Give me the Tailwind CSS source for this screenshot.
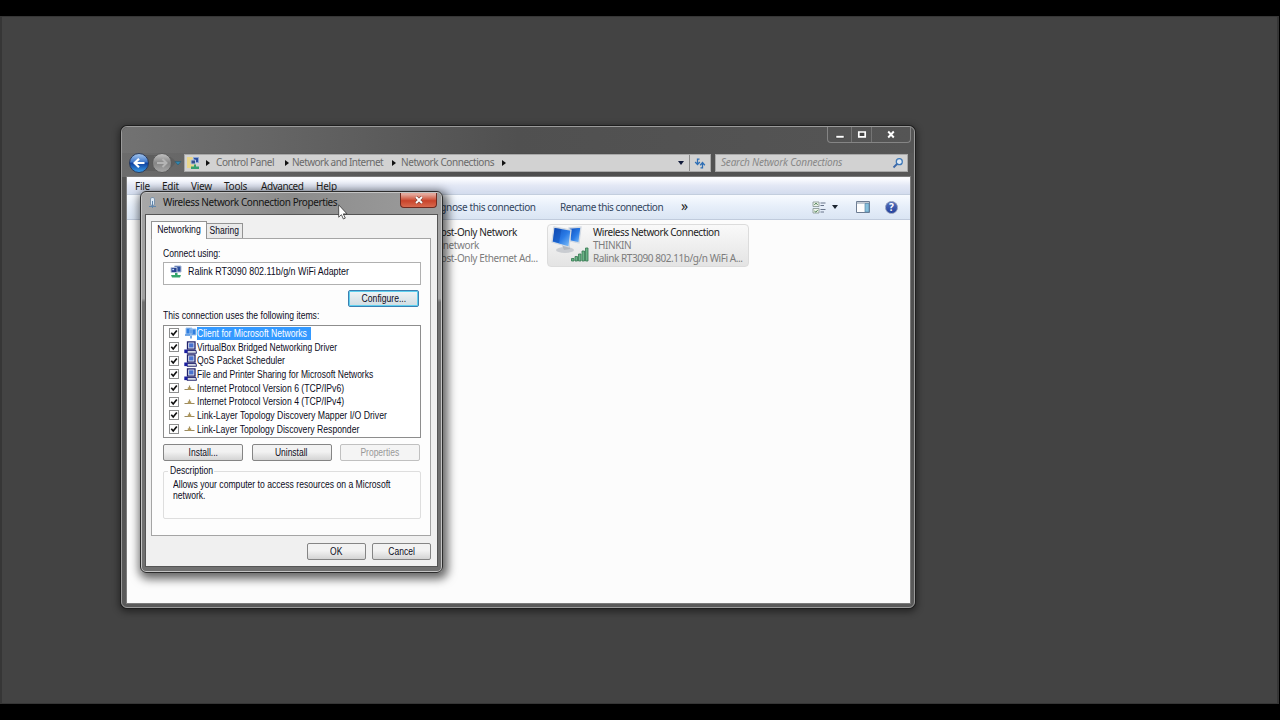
<!DOCTYPE html>
<html lang="en">
<head>
    <meta charset="UTF-8">
    <meta name="viewport" content="width=device-width, initial-scale=1.0">
    <title>Network Connections</title>
    <script src="https://cdn.jsdelivr.net/npm/@tailwindcss/browser@4"></script>
</head>
<body class="bg-black">
    <!-- Shared icons -->
    <svg class="hidden">
        <symbol id="check" viewBox="0 0 10 10">
            <rect x=".5" y=".5" width="9" height="9" fill="#fff" stroke="#8e8f8f"/>
            <path d="M2.3 4.8 4.2 7 7.8 2.4" fill="none" stroke="#111" stroke-width="1.7"/>
        </symbol>
        <symbol id="service" viewBox="0 0 13 13">
            <path d="M3.500 .8H11v7.400H3.500z" fill="#dfe4f2" stroke="#20226a" stroke-width="1.3"/>
            <path d="M5.100 2.300h4.400v4.200H5.100z" fill="#4a72cf"/>
            <path d="M3 9.500h9l.5 2.800H3z" fill="#d5d8e4" stroke="#20226a" stroke-width=".9"/>
            <path d="M.3 8.500h3.200v3.600H.3z" fill="#1a1ea0"/>
        </symbol>
        <symbol id="protocol" viewBox="0 0 11 8">
            <path d="M.5 5.500h10M5.500 1.500v4" stroke="#9a8a62" stroke-width="1.200"/>
            <path d="M3.800 3.300h3.400v2.400H3.800z" fill="#b39a5a"/>
        </symbol>
        <symbol id="adapter" viewBox="0 0 13 13">
            <path d="M5.500 1H12v6H5.500z" fill="#2c4f9f" stroke="#a9b8d4"/>
            <path d="M2 2.500h6v5H2z" fill="#27408f" stroke="#b6c3dc"/>
            <path d="M3.300 3.800h1.800v1.400H3.300z" fill="#bfe0ff"/>
            <path d="M6 8h2.500v2H12l-1 2.500H3L2 10h4z" fill="#35a56b"/>
        </symbol>
    </svg>

    <!-- Desktop -->
    <div class="relative w-[1280px] h-[720px] overflow-hidden bg-black pt-4 pb-4">
        <div class="h-[688px] w-[1279px] bg-[#434343] border-x-2 border-t border-b border-[#363636]"></div>

        <!-- Explorer window -->
        <div class="absolute left-[121px] top-[126px] w-[794px] h-[482px] rounded-md border border-[#9a9a9a] bg-linear-to-b from-[#575757] via-[#4e4e4e] to-[#5a5a5a] shadow-[0_0_0_1px_#1e1e1e,0_2px_7px_2px_rgba(0,0,0,0.45)] flex flex-col pl-[5px] pr-[4px] pb-1 font-['Noto_Sans',sans-serif] text-[10px]">
            <!-- Caption buttons -->
            <div class="h-[26px] -ml-[5px] -mr-[4px] pr-[3px] flex justify-end items-start rounded-t-md bg-linear-to-r from-[#727272] via-[#505050] to-[#555]">
                <div class="flex h-[16px] w-[84px] border border-t-0 border-[#858585] rounded-b">
                    <div class="w-[24px] border-r border-[#747474] flex items-center justify-center">
                        <svg class="w-[10px] h-[10px]" viewBox="0 0 10 10"><path d="M1 5.500h8v2.500H1z" fill="#fff" stroke="#333" stroke-width=".5"/></svg>
                    </div>
                    <div class="w-[20px] border-r border-[#747474] flex items-center justify-center">
                        <svg class="w-[10px] h-[10px]" viewBox="0 0 10 10"><path d="M1.800 2h6.400v4.800H1.800z" fill="#444" stroke="#fff" stroke-width="1.700"/></svg>
                    </div>
                    <div class="grow flex items-center justify-center">
                        <svg class="w-[10px] h-[10px]" viewBox="0 0 10 10"><path d="M2.200 1.500 7.800 7.500M7.800 1.500 2.200 7.500" stroke="#fff" stroke-width="1.900"/></svg>
                    </div>
                </div>
            </div>

            <!-- Address bar -->
            <div class="h-[24px] -ml-[5px] -mr-[4px] pl-[7px] pr-[6px] flex items-start shrink-0 bg-linear-to-r from-[#6c6c6c] via-[#4d4d4d] to-[#575757]">
                <svg class="w-[54px] h-[22px] shrink-0" viewBox="0 0 54 22">
                    <defs>
                        <linearGradient id="back" x1="0" y1="0" x2="0" y2="1">
                            <stop offset="0" stop-color="#a9c9ee"/><stop offset=".45" stop-color="#3f78cb"/>
                            <stop offset=".5" stop-color="#0f3f9e"/><stop offset="1" stop-color="#3aa0ec"/>
                        </linearGradient>
                        <linearGradient id="fwd" x1="0" y1="0" x2="0" y2="1">
                            <stop offset="0" stop-color="#c4c4c4"/><stop offset=".5" stop-color="#858585"/><stop offset="1" stop-color="#a8a8a8"/>
                        </linearGradient>
                    </defs>
                    <path d="M10 2h24q8 0 13 7-5 8-13 9H10z" fill="#5e5e5e"/>
                    <circle cx="10" cy="10" r="9.500" fill="url(#back)" stroke="#2c3c5c"/>
                    <path d="M15.500 10H6M10 5.800 5.600 10l4.400 4.200" fill="none" stroke="#fff" stroke-width="2.200"/>
                    <circle cx="33" cy="10" r="9.500" fill="url(#fwd)" stroke="#5a5a5a"/>
                    <path d="M28 10h9M33.500 6l4 4-4 4" fill="none" stroke="#b4b4b4" stroke-width="2"/>
                    <path d="M46 8.500h6l-3 3.500z" fill="#2f86b0" stroke="#2a5a70" stroke-width=".6"/>
                </svg>
                <div class="ml-px flex h-[18px] mt-px w-[527px] bg-[#d2d2d2] border border-[#a8a8a8] text-[#6a6a6a] items-center">
                    <svg class="w-[15px] h-[14px] ml-px" viewBox="0 0 15 14">
                        <path d="M1 1h5l1 1h3v10H1z" fill="#e9d68a"/>
                        <path d="M7.500 1.500h5v5h-5z" fill="#2d4f9f" stroke="#8aa5d5"/>
                        <path d="M5 4h4.500v4H5z" fill="#37508f" stroke="#b5c6e2"/>
                        <path d="M8 8.500h2v2h3V13H5v-2.500h3z" fill="#35a070"/>
                    </svg>
                    <svg class="w-[4px] h-[6px] ml-[5px]" viewBox="0 0 4 6"><path d="M0 0v6l4-3z" fill="#111"/></svg>
                    <span class="w-[69px] ml-[6px] pb-px whitespace-nowrap tracking-[-0.4px]">Control Panel</span>
                    <svg class="w-[4px] h-[6px]" viewBox="0 0 4 6"><path d="M0 0v6l4-3z" fill="#111"/></svg>
                    <span class="w-[100px] ml-[3px] pb-px whitespace-nowrap tracking-[-0.53px]">Network and Internet</span>
                    <svg class="w-[4px] h-[6px]" viewBox="0 0 4 6"><path d="M0 0v6l4-3z" fill="#111"/></svg>
                    <span class="w-[101px] ml-[5px] pb-px whitespace-nowrap tracking-[-0.43px]">Network Connections</span>
                    <svg class="w-[4px] h-[6px]" viewBox="0 0 4 6"><path d="M0 0v6l4-3z" fill="#111"/></svg>
                    <svg class="w-[6px] h-[4px] ml-auto mr-[5px]" viewBox="0 0 6 4"><path d="M0 0h6L3 4z" fill="#101a3a"/></svg>
                    <div class="w-[21px] h-full border-l border-[#8c8c8c] flex items-center justify-center">
                        <svg class="w-[12px] h-[11px]" viewBox="0 0 12 11">
                            <path d="M5.500 1.200H3.500v5M1.200 4l2.300 2.600L5.800 4M6.500 9.800h2v-5M6.200 7.200l2.300-2.600 2.300 2.600" fill="none" stroke="#2f6fb5" stroke-width="1.300"/>
                        </svg>
                    </div>
                </div>
                <div class="ml-[4px] mt-px grow h-[18px] bg-[#d2d2d2] border border-[#a8a8a8] flex items-center justify-between pl-[5px] pr-[3px] text-[#888] italic">
                    <span class="pb-px whitespace-nowrap tracking-[-0.2px]">Search Network Connections</span>
                    <svg class="w-[12px] h-[12px]" viewBox="0 0 12 12"><circle cx="7.300" cy="4.700" r="3" fill="#dfe9f4" stroke="#3d78b8" stroke-width="1.300"/><path d="M5 7 1.500 10.500" stroke="#3d68a8" stroke-width="1.800"/></svg>
                </div>
            </div>

            <!-- Client area -->
            <div class="grow bg-[#fcfcfc] flex flex-col shadow-[0_0_0_1px_#7c7c7c] text-[#1e1e1e]">
                <div class="h-[17px] pt-[2px] bg-linear-to-b from-[#fbfcff] from-10% via-[#e3e8f5] to-[#d3dcee] flex items-center whitespace-nowrap pl-[8px] tracking-[-0.25px]">
                    <span class="w-[27px]">File</span>
                    <span class="w-[29px]">Edit</span>
                    <span class="w-[33px]">View</span>
                    <span class="w-[37px]">Tools</span>
                    <span class="w-[55px] tracking-[-0.45px]">Advanced</span>
                    <span>Help</span>
                </div>
                <div class="h-[26px] border-t border-[#c3cede] border-b border-b-[#c0cbdc] bg-linear-to-b from-[#f8fbff] via-[#e6eef9] to-[#dae5f3] flex items-center pl-[299px] pr-[12px] whitespace-nowrap text-[#33465f]">
                    <span class="w-[134px] tracking-[-0.38px]">Diagnose this connection</span>
                    <span class="w-[121px] tracking-[-0.45px]">Rename this connection</span>
                    <span class="text-[14px] leading-none pb-[2px] text-[#222]">»</span>
                    <svg class="w-[14px] h-[13px] ml-auto" viewBox="0 0 14 13">
                        <path d="M1 1h6v4.500H1zM1 7.500h6V12H1z" fill="#eef4ea" stroke="#8d9c98" stroke-width=".9"/>
                        <path d="m2.300 4 1.700-2 1.700 2M2.300 10l1.700 1.200L5.700 9" fill="none" stroke="#57895f"/>
                        <path d="M8.500 2h5M8.500 4.500H12M8.500 8.500h5M8.500 11H12" stroke="#68748a"/>
                    </svg>
                    <svg class="w-[6px] h-[4px] ml-[6px]" viewBox="0 0 6 4"><path d="M0 0h6L3 4z" fill="#1c2430"/></svg>
                    <svg class="w-[14px] h-[12px] ml-[18px]" viewBox="0 0 14 12">
                        <path d="M.5.500h13v11H.5z" fill="#fdfdfd" stroke="#6d7c92"/><path d="M.5 2h13" stroke="#8494a8"/><path d="M9 2.500h4v8.500H9z" fill="#86bfdc" stroke="#5a87a8" stroke-width=".7"/>
                    </svg>
                    <div class="ml-[15px] w-[13px] h-[13px] rounded-full bg-linear-to-b from-[#5570bd] to-[#24419c] border border-[#8a96b8] text-white text-[10px] font-bold leading-none flex items-center justify-center">?</div>
                </div>
                <div class="flex pt-[4px] pl-[215px] leading-[13px] whitespace-nowrap">
                    <div class="w-[205px] h-[43px] pl-[45px] pt-[2px] tracking-[-0.38px]">
                        <div>VirtualBox Host-Only Network</div>
                        <div class="text-[#7c7c7c]">Unidentified network</div>
                        <div class="text-[#7c7c7c]">VirtualBox Host-Only Ethernet Ad...</div>
                    </div>
                    <div class="w-[202px] h-[43px] flex border border-[#dcdcdc] rounded-sm bg-linear-to-b from-[#f9f9f9] to-[#e4e4e4] pl-[3px] pt-px">
                        <svg class="w-[38px] h-[38px] mr-[4px]" viewBox="0 0 38 38">
                            <defs>
                                <linearGradient id="scr" x1="0" y1="0" x2="1" y2="1">
                                    <stop offset="0" stop-color="#0c49b8"/><stop offset=".55" stop-color="#2a7be6"/><stop offset="1" stop-color="#8cc8fa"/>
                                </linearGradient>
                            </defs>
                            <ellipse cx="14" cy="24" rx="9" ry="3" fill="#c9ccd1"/>
                            <path d="m11 19 7-1 1 5-6 1z" fill="#b3b8bf"/>
                            <path d="m18 2 12-1-2 16-9-2z" fill="url(#scr)" stroke="#d3dae3" stroke-width="1.300"/>
                            <path d="m3 1 17 3-2 17L1 16z" fill="url(#scr)" stroke="#d3dae3" stroke-width="1.300"/>
                            <path d="m3.500 2 7 1L8 17l-6-2z" fill="#0a3d9e" opacity=".35"/>
                            <g fill="#6bb487" stroke="#33774f" stroke-width=".8">
                                <path d="M20.500 32.500h2.500V35h-2.500zM24 30.500h2.500V35H24zM27.500 28h2.500v7h-2.500zM31 25h2.500v10H31zM34.500 22H37v13h-2.500z"/>
                            </g>
                        </svg>
                        <div class="tracking-[-0.44px]">
                            <div>Wireless Network Connection</div>
                            <div class="text-[#7c7c7c]">THINKIN</div>
                            <div class="text-[#7c7c7c]">Ralink RT3090 802.11b/g/n WiFi A...</div>
                        </div>
                    </div>
                </div>
            </div>
        </div>

        <!-- Properties dialog -->
        <div class="absolute left-[140px] top-[191px] w-[303px] h-[382px] rounded-md border border-[#2c2c2c] bg-linear-to-b from-[#a2a2a2] from-28% to-[#707070] to-29% shadow-[inset_0_0_0_1px_#c4c4c4,2px_3px_10px_3px_rgba(0,0,0,0.6)] flex flex-col px-[5px] pb-[6px] font-['Liberation_Sans',sans-serif] text-[10px] text-[#0c0c1c]">
            <div class="h-[22px] shrink-0 -mx-1 px-1 mt-px flex items-start rounded-t bg-linear-to-r from-[#a8a8a8] via-[#8c8c8c] to-[#9c9c9c]">
                <svg class="w-[9px] h-[12px] ml-[2px] mt-[4px]" viewBox="0 0 9 12"><rect x="2.500" y=".5" width="4" height="8" rx="1.500" fill="#dce9f5" stroke="#7e93aa"/><path d="M1 9.500h7M4.500 4v7" stroke="#5f86ad"/></svg>
                <span class="ml-[6px] mt-px leading-[16px] tracking-[-0.4px] font-['Noto_Sans',sans-serif] whitespace-nowrap text-[#151515]">Wireless Network Connection Properties</span>
                <div class="ml-auto h-[15px] w-[37px] rounded-b border border-t-0 border-[#6e2a20] bg-linear-to-b from-[#e3a79a] from-10% via-[#c8432a] via-55% to-[#d8694e] flex items-center justify-center">
                    <svg class="w-[10px] h-[9px]" viewBox="0 0 10 9"><path d="M2 1 8 7M8 1 2 7" stroke="#6e3a30" stroke-width="3"/><path d="M2 1 8 7M8 1 2 7" stroke="#fff" stroke-width="1.900"/></svg>
                </div>
            </div>
            <div class="grow bg-[#f0f0f0] shadow-[0_0_0_1px_#555] flex flex-col pl-[5px] pr-[6px] pt-[5px]">
                <!-- Tabs -->
                <div class="flex items-end h-[18px] relative whitespace-nowrap">
                    <div class="h-[18px] w-[56px] -mb-px pb-[3px] bg-[#fdfdfd] border border-b-0 border-[#939393] flex items-center justify-center relative z-10"><span class="scale-x-[0.87]">Networking</span></div>
                    <div class="h-[15px] w-[36px] pb-px bg-[#eaeaea] border border-b-0 border-l-0 border-[#939393] flex items-center justify-center"><span class="scale-x-[0.85]">Sharing</span></div>
                </div>
                <div class="h-[298px] bg-[#fdfdfd] border border-[#a5a5a5] pl-[11px] pr-[9px] flex flex-col">
                    <span class="mt-[9px] leading-[12px] origin-left scale-x-[0.86]">Connect using:</span>
                    <div class="mt-[2px] h-[23px] shrink-0 border border-[#b0b0b0] bg-white flex items-center pl-[5px] pb-[4px] whitespace-nowrap">
                        <svg class="w-[13px] h-[13px] mr-[6px]"><use href="#adapter"/></svg>
                        <span class="origin-left scale-x-[0.89]">Ralink RT3090 802.11b/g/n WiFi Adapter</span>
                    </div>
                    <div class="mt-[5px] self-end mr-[2px] w-[71px] h-[17px] rounded-xs border border-[#3c7fb1] shadow-[inset_0_0_0_1px_#5fd0ef] bg-linear-to-b from-[#f0f4f6] to-[#d0dce2] flex items-center justify-center"><span class="scale-x-[0.86]">Configure...</span></div>
                    <span class="mt-[3px] leading-[12px] origin-left scale-x-[0.86]">This connection uses the following items:</span>
                    <div class="mt-[3px] h-[113px] shrink-0 border border-[#8d8d8d] bg-white pt-[0.5px] pl-[5px] whitespace-nowrap">
                        <div class="flex items-center h-[13.7px]"><svg class="w-[10px] h-[10px] mr-[5px]"><use href="#check"/></svg>
                            <svg class="w-[13px] h-[12px]" viewBox="0 0 13 12"><path d="M2 1h6v6H2zM6 2h6v6H6z" fill="#2e7ee0" stroke="#9fc4ee"/><path d="M1 8h5M7 8.500v3" stroke="#4a8fe0" stroke-width="1.500"/></svg>
                            <div class="h-[13px] leading-[13px] bg-[#3399ff] text-white w-[114px]"><span class="inline-block origin-left scale-x-[0.86]">Client for Microsoft Networks</span></div></div>
                        <div class="flex items-center h-[13.7px]"><svg class="w-[10px] h-[10px] mr-[5px]"><use href="#check"/></svg><svg class="w-[13px] h-[13px]"><use href="#service"/></svg><span class="origin-left scale-x-[0.85]">VirtualBox Bridged Networking Driver</span></div>
                        <div class="flex items-center h-[13.7px]"><svg class="w-[10px] h-[10px] mr-[5px]"><use href="#check"/></svg><svg class="w-[13px] h-[13px]"><use href="#service"/></svg><span class="origin-left scale-x-[0.87]">QoS Packet Scheduler</span></div>
                        <div class="flex items-center h-[13.7px]"><svg class="w-[10px] h-[10px] mr-[5px]"><use href="#check"/></svg><svg class="w-[13px] h-[13px]"><use href="#service"/></svg><span class="origin-left scale-x-[0.85]">File and Printer Sharing for Microsoft Networks</span></div>
                        <div class="flex items-center h-[13.7px]"><svg class="w-[10px] h-[10px] mr-[5px]"><use href="#check"/></svg><svg class="w-[11px] h-[8px] mr-[2px]"><use href="#protocol"/></svg><span class="origin-left scale-x-[0.865]">Internet Protocol Version 6 (TCP/IPv6)</span></div>
                        <div class="flex items-center h-[13.7px]"><svg class="w-[10px] h-[10px] mr-[5px]"><use href="#check"/></svg><svg class="w-[11px] h-[8px] mr-[2px]"><use href="#protocol"/></svg><span class="origin-left scale-x-[0.865]">Internet Protocol Version 4 (TCP/IPv4)</span></div>
                        <div class="flex items-center h-[13.7px]"><svg class="w-[10px] h-[10px] mr-[5px]"><use href="#check"/></svg><svg class="w-[11px] h-[8px] mr-[2px]"><use href="#protocol"/></svg><span class="origin-left scale-x-[0.87]">Link-Layer Topology Discovery Mapper I/O Driver</span></div>
                        <div class="flex items-center h-[13.7px]"><svg class="w-[10px] h-[10px] mr-[5px]"><use href="#check"/></svg><svg class="w-[11px] h-[8px] mr-[2px]"><use href="#protocol"/></svg><span class="origin-left scale-x-[0.865]">Link-Layer Topology Discovery Responder</span></div>
                    </div>
                    <div class="mt-[6px] flex justify-between pr-px">
                        <div class="w-[80px] h-[17px] rounded-xs border border-[#858585] bg-linear-to-b from-[#f2f2f2] from-45% to-[#d4d4d4] flex items-center justify-center"><span class="scale-x-[0.85]">Install...</span></div>
                        <div class="w-[80px] h-[17px] rounded-xs border border-[#858585] bg-linear-to-b from-[#f2f2f2] from-45% to-[#d4d4d4] flex items-center justify-center"><span class="scale-x-[0.85]">Uninstall</span></div>
                        <div class="w-[80px] h-[17px] rounded-xs border border-[#c0c0c0] bg-[#f4f4f4] text-[#989898] flex items-center justify-center"><span class="scale-x-[0.85]">Properties</span></div>
                    </div>
                    <fieldset class="mt-[4px] h-[54px] min-w-0 shrink-0 border border-[#dedede] rounded-xs pl-[9px]">
                        <legend class="-ml-[5px] w-[46px] px-[2px] leading-[12px]"><span class="inline-block origin-left scale-x-[0.86]">Description</span></legend>
                        <p class="mt-[2px] w-max leading-[11px] whitespace-nowrap origin-left scale-x-[0.86]">Allows your computer to access resources on a Microsoft<br>network.</p>
                    </fieldset>
                </div>
                <div class="mt-[7px] flex justify-end gap-[6px]">
                    <div class="w-[59px] h-[17px] rounded-xs border border-[#858585] bg-linear-to-b from-[#f2f2f2] from-45% to-[#d4d4d4] flex items-center justify-center"><span class="scale-x-[0.85]">OK</span></div>
                    <div class="w-[59px] h-[17px] rounded-xs border border-[#858585] bg-linear-to-b from-[#f2f2f2] from-45% to-[#d4d4d4] flex items-center justify-center"><span class="scale-x-[0.85]">Cancel</span></div>
                </div>
            </div>
        </div>

        <!-- Mouse pointer -->
        <svg class="absolute left-[338px] top-[204px] w-[10px] h-[16px]" viewBox="0 0 10 16"><path d="M.7.800v12.400l2.700-2.500 2 4.300 1.900-.9-2-4.200h3.700z" fill="#fff" stroke="#333" stroke-width=".8"/></svg>
    </div>
</body>
</html>
